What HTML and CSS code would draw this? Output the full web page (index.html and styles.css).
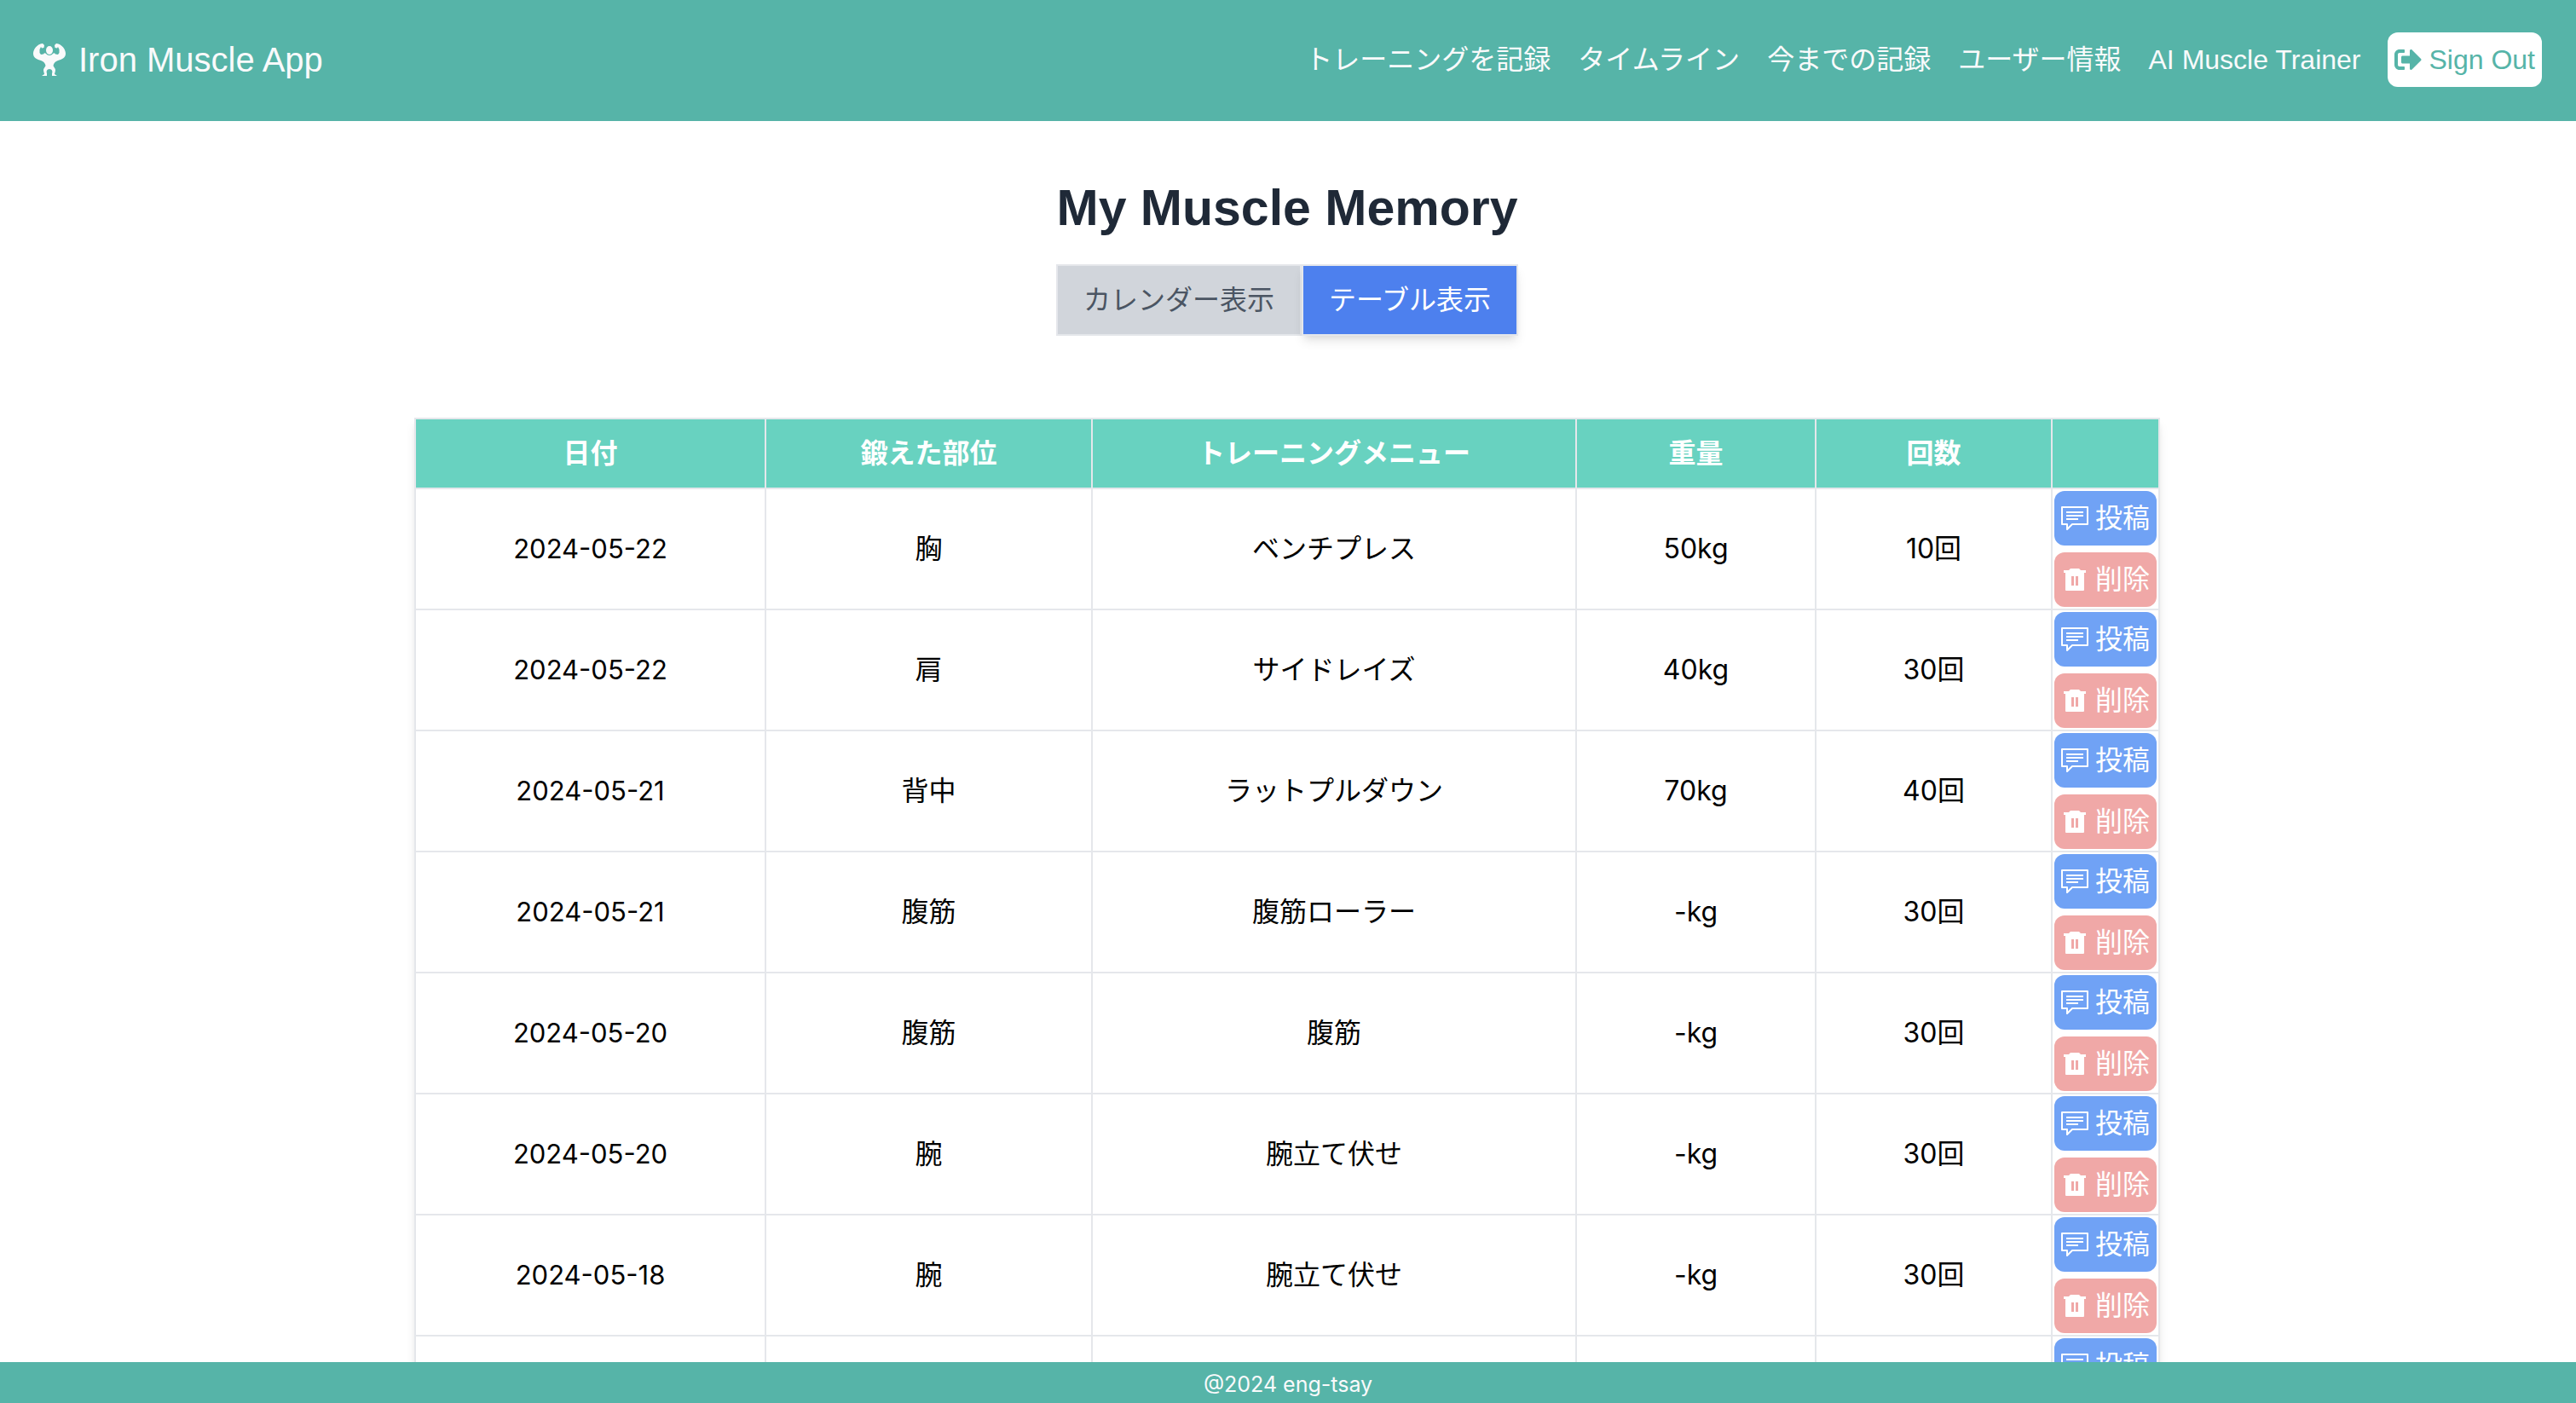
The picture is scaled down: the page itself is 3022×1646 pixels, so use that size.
FILE: index.html
```html
<!DOCTYPE html>
<html lang="ja">
<head>
<meta charset="utf-8">
<title>Iron Muscle App</title>
<link rel="stylesheet" href="styles.css">
</head>
<body>
<svg class="sprite" aria-hidden="true">
  <symbol id="post" viewBox="0 0 32 32">
    <path d="M1 3H31V23H13L7 29V23H1Z" fill="none" stroke="currentColor" stroke-width="2" stroke-linejoin="round"/>
    <path d="M6 9H26M6 13H26M6 17H20" fill="none" stroke="currentColor" stroke-width="2"/>
  </symbol>
  <symbol id="trash" viewBox="0 0 32 32">
    <path fill="currentColor" fill-rule="evenodd" d="M11 3H21L23 5H29V8H27V28Q27 29 26 29H6Q5 29 5 28V8H3V5H9ZM12 12V23H15V12ZM17 12V23H20V12Z"/>
  </symbol>
</svg>
<header class="header">
  <a class="brand" href="#">
    <svg class="brand-icon" viewBox="0 0 40 40" aria-hidden="true">
      <path fill="currentColor" d="M12 1C5 2 1 8 1 13C1 18 6 20 10 21C13 22 15 24 15.500 27C15 29 13 30 13 32C13 34 14 36 14 37L11 39H17V36C16 34 17 31 20 31C23 31 24 34 23 36V39H29L26 37C26 36 27 34 27 32C27 30 25 29 24.500 27C25 24 27 22 30 21C34 20 39 18 39 13C39 8 35 2 28 1L26 3L26.500 6L29 6.500L30 5L31.500 8V12L30 14L27 13.500C26 12 25 12 24 13C22 15.500 18 15.500 16 13C15 12 14 12 13 13.500L10 14L8.500 12V8L10 5L11 6.500L13.500 6L14 3Z"/>
      <ellipse cx="20" cy="9" rx="4" ry="5" fill="currentColor"/>
    </svg>
    <span>Iron Muscle App</span>
  </a>
  <nav class="nav">
    <a href="#">トレーニングを記録</a>
    <a href="#">タイムライン</a>
    <a href="#">今までの記録</a>
    <a href="#">ユーザー情報</a>
    <a href="#">AI Muscle Trainer</a>
    <button class="btn signout" type="button">
      <svg class="icon" viewBox="0 0 512 512" aria-hidden="true"><path fill="currentColor" d="M497 273L329 441c-15 15-41 4.500-41-17v-96H152c-13.300 0-24-10.700-24-24v-96c0-13.300 10.700-24 24-24h136V88c0-21.400 25.900-32 41-17l168 168c9.300 9.400 9.300 24.600 0 34zM192 436v-40c0-6.600-5.400-12-12-12H96c-17.700 0-32-14.300-32-32V160c0-17.700 14.300-32 32-32h84c6.600 0 12-5.400 12-12V76c0-6.600-5.400-12-12-12H96c-53 0-96 43-96 96v192c0 53 43 96 96 96h84c6.600 0 12-5.400 12-12z"/></svg>
      Sign Out
    </button>
  </nav>
</header>
<main class="main">
  <h1 class="title">My Muscle Memory</h1>
  <div class="tabs">
    <button class="tab" type="button">カレンダー表示</button>
    <button class="tab active" type="button">テーブル表示</button>
  </div>
  <table class="records">
    <colgroup><col class="c-date"><col class="c-part"><col class="c-menu"><col class="c-weight"><col class="c-reps"><col class="c-action"></colgroup>
    <thead>
      <tr><th>日付</th><th>鍛えた部位</th><th>トレーニングメニュー</th><th>重量</th><th>回数</th><th></th></tr>
    </thead>
    <tbody>
      <tr><td class="date">2024-05-22</td><td>胸</td><td>ベンチプレス</td><td>50kg</td><td>10回</td><td><div class="actions"><button class="btn post" type="button"><svg class="icon"><use href="#post"/></svg>投稿</button><button class="btn delete" type="button"><svg class="icon"><use href="#trash"/></svg>削除</button></div></td></tr>
      <tr><td class="date">2024-05-22</td><td>肩</td><td>サイドレイズ</td><td>40kg</td><td>30回</td><td><div class="actions"><button class="btn post" type="button"><svg class="icon"><use href="#post"/></svg>投稿</button><button class="btn delete" type="button"><svg class="icon"><use href="#trash"/></svg>削除</button></div></td></tr>
      <tr><td class="date">2024-05-21</td><td>背中</td><td>ラットプルダウン</td><td>70kg</td><td>40回</td><td><div class="actions"><button class="btn post" type="button"><svg class="icon"><use href="#post"/></svg>投稿</button><button class="btn delete" type="button"><svg class="icon"><use href="#trash"/></svg>削除</button></div></td></tr>
      <tr><td class="date">2024-05-21</td><td>腹筋</td><td>腹筋ローラー</td><td>-kg</td><td>30回</td><td><div class="actions"><button class="btn post" type="button"><svg class="icon"><use href="#post"/></svg>投稿</button><button class="btn delete" type="button"><svg class="icon"><use href="#trash"/></svg>削除</button></div></td></tr>
      <tr><td class="date">2024-05-20</td><td>腹筋</td><td>腹筋</td><td>-kg</td><td>30回</td><td><div class="actions"><button class="btn post" type="button"><svg class="icon"><use href="#post"/></svg>投稿</button><button class="btn delete" type="button"><svg class="icon"><use href="#trash"/></svg>削除</button></div></td></tr>
      <tr><td class="date">2024-05-20</td><td>腕</td><td>腕立て伏せ</td><td>-kg</td><td>30回</td><td><div class="actions"><button class="btn post" type="button"><svg class="icon"><use href="#post"/></svg>投稿</button><button class="btn delete" type="button"><svg class="icon"><use href="#trash"/></svg>削除</button></div></td></tr>
      <tr><td class="date">2024-05-18</td><td>腕</td><td>腕立て伏せ</td><td>-kg</td><td>30回</td><td><div class="actions"><button class="btn post" type="button"><svg class="icon"><use href="#post"/></svg>投稿</button><button class="btn delete" type="button"><svg class="icon"><use href="#trash"/></svg>削除</button></div></td></tr>
      <tr><td></td><td></td><td></td><td></td><td></td><td><div class="actions"><button class="btn post" type="button"><svg class="icon"><use href="#post"/></svg>投稿</button><button class="btn delete" type="button"><svg class="icon"><use href="#trash"/></svg>削除</button></div></td></tr>
    </tbody>
  </table>
</main>
<footer class="footer">@2024 eng-tsay</footer>
</body>
</html>
```
FILE: styles.css
```css
* {
  box-sizing: border-box;
}

body {
  margin: 0;
  height: 100vh;
  display: flex;
  flex-direction: column;
  font-family: "Liberation Sans", "Noto Sans CJK JP", sans-serif;
  font-size: 32px;
  line-height: 48px;
  color: #000;
  background: #fff;
}

button {
  font: inherit;
  cursor: pointer;
}

a {
  color: inherit;
  text-decoration: none;
}

.sprite {
  display: none;
}

.header {
  display: flex;
  align-items: center;
  justify-content: space-between;
  padding: 38px 40px 40px 38px;
  color: #f9fafb;
  background: #56b4a8;
}

.brand {
  display: flex;
  align-items: center;
  gap: 14px;
  font-size: 40px;
}

.brand-icon {
  width: 40px;
  height: 40px;
}

.nav {
  display: flex;
  align-items: center;
  gap: 32px;
}

.btn {
  display: flex;
  align-items: center;
  gap: 8px;
  padding: 8px;
  border: 0;
  border-radius: 12px;
  color: #fff;
  white-space: nowrap;
}

.icon {
  width: 32px;
  height: 32px;
}

.signout {
  color: #56b4a8;
  background: #fff;
}

.main {
  flex: 1;
  min-height: 0;
  padding-right: 2px;
  overflow-y: auto;
  scrollbar-width: none;
  display: flex;
  flex-direction: column;
  align-items: center;
}

.title {
  margin: 66px 0 30px;
  font-size: 59px;
  line-height: 72px;
  color: #1f2937;
}

.tabs {
  display: flex;
  margin-bottom: 96px;
}

.tab {
  padding: 16px 30px;
  border: 2px solid #e5e7eb;
  color: #4b5563;
  background: #d1d5db;
}

.active {
  color: #fff;
  background: #4d80ee;
  box-shadow: 0 8px 12px -2px rgba(0, 0, 0, 0.1), 0 4px 8px -4px rgba(0, 0, 0, 0.1);
}

.records {
  width: 100%;
  max-width: 2048px;
  table-layout: fixed;
  border-collapse: collapse;
  font-family: Inter, "Noto Sans CJK JP", sans-serif;
  text-align: center;
  box-shadow: 0 8px 12px -2px rgba(0, 0, 0, 0.1), 0 4px 8px -4px rgba(0, 0, 0, 0.1);
}

.c-date { width: 411px; }
.c-part { width: 383px; }
.c-menu { width: 568px; }
.c-weight { width: 281px; }
.c-reps { width: 277px; }
.c-action { width: 126px; }

.records th,
.records td {
  padding: 2px;
  border: 2px solid #e5e7eb;
}

.records th {
  padding: 16px 0;
  color: #fff;
  background: #68d2c0;
}

.records .date {
  font-size: 31px;
}

.actions {
  display: flex;
  flex-direction: column;
  gap: 8px;
}

.post {
  background: #70a2f5;
}

.delete {
  background: #f0a8a7;
}

.footer {
  padding-top: 4px;
  font-family: Inter, sans-serif;
  font-size: 25px;
  line-height: 44px;
  text-align: center;
  color: #f9fafb;
  background: #56b4a8;
}
```
